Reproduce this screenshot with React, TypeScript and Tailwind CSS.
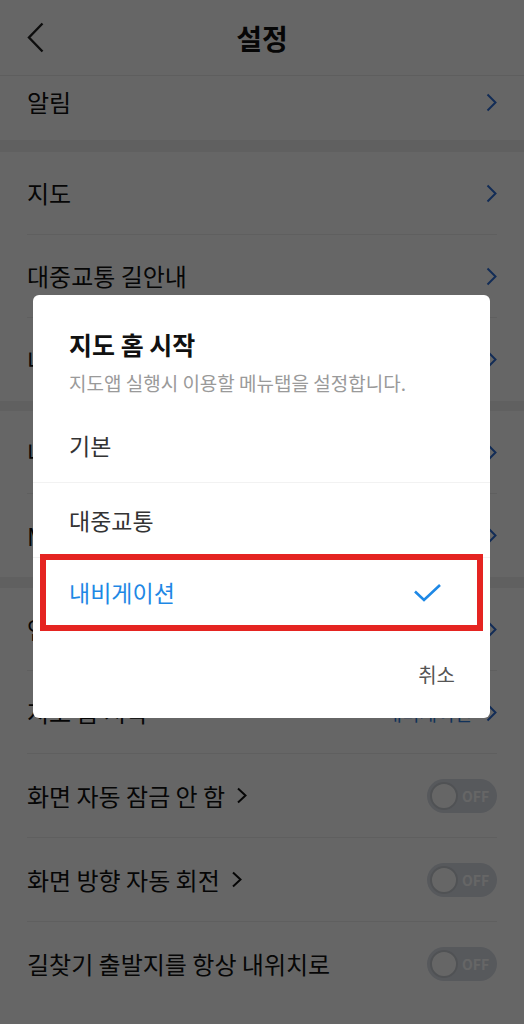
function Chevron({ className = "" }: { className?: string }) {
  return (
    <svg width="11" height="19" viewBox="0 0 11 19" fill="none" className={className}>
      <path d="M1.5 1.5l8 8-8 8" stroke="currentColor" strokeWidth="2" />
    </svg>
  );
}

function Row({ label, value, line = true }: { label: string; value?: string; line?: boolean }) {
  return (
    <div className={`mx-[27px] flex h-[83px] items-center justify-between ${line ? "border-b border-[#eeeeee]" : ""}`}>
      <span className="text-[24px] leading-none text-[#111]">{label}</span>
      <div className="flex items-center gap-[14px]">
        {value && <span className="text-[19px] leading-none text-[#2b7de0]">{value}</span>}
        <Chevron className="text-[#2f6fd6]" />
      </div>
    </div>
  );
}

function ToggleRow({ label, arrow = true, line = true }: { label: string; arrow?: boolean; line?: boolean }) {
  return (
    <div className={`mx-[27px] flex h-[84px] items-center justify-between ${line ? "border-b border-[#eeeeee]" : ""}`}>
      <div className="flex items-center gap-[11px]">
        <span className="text-[24px] leading-none text-[#111]">{label}</span>
        {arrow && (
          <svg width="12" height="17" viewBox="0 0 12 17" fill="none">
            <path d="M2 1.5l7.5 7-7.5 7" stroke="#111" strokeWidth="2" />
          </svg>
        )}
      </div>
      <div className="flex h-[34px] w-[70px] items-center rounded-full bg-[#d9dee7]">
        <div className="ml-[3px] h-[28px] w-[28px] rounded-full border-2 border-[#c8ccd3] bg-white" />
        <span className="ml-[4px] text-[14px] font-bold leading-none text-white">OFF</span>
      </div>
    </div>
  );
}

export default function App() {
  return (
    <div className="relative h-[1024px] w-full overflow-hidden bg-white font-['Noto_Sans_CJK_KR','Noto_Sans',sans-serif]">
      {/* Settings page */}
      <header className="grid h-[76px] grid-cols-[1fr_auto_1fr] items-center border-b border-[#ececec] px-[27px]">
        <svg width="17" height="31" viewBox="0 0 17 31" fill="none">
          <path d="M15.5 1.5L2 15.5l13.5 14" stroke="#222" strokeWidth="2.4" />
        </svg>
        <h1 className="text-[28px] font-bold leading-none text-[#111]">설정</h1>
        <div />
      </header>

      <div className="mx-[27px] flex h-[64px] items-center justify-between pb-[12px]">
        <span className="text-[24px] leading-none text-[#111]">알림</span>
        <Chevron className="text-[#2f6fd6]" />
      </div>

      <div className="h-[12px] bg-[#f0f0f0]" />
      <Row label="지도" />
      <Row label="대중교통 길안내" />
      <Row label="내비게이션" line={false} />

      <div className="h-[10px] bg-[#f0f0f0]" />
      <Row label="내 장소" />
      <Row label="MY플레이스" line={false} />

      <div className="h-[11px] bg-[#f0f0f0]" />
      <Row label="언어 설정" />
      <Row label="지도 홈 시작" value="내비게이션" />
      <ToggleRow label="화면 자동 잠금 안 함" />
      <ToggleRow label="화면 방향 자동 회전" />
      <ToggleRow label="길찾기 출발지를 항상 내위치로" arrow={false} line={false} />

      {/* Dim overlay */}
      <div className="absolute inset-0 bg-black/60" />

      {/* Dialog */}
      <div className="absolute left-[33px] top-[295px] w-[457px] overflow-hidden rounded-[6px] bg-white">
        <div className="px-[36px] pt-[32px]">
          <h2 className="text-[25px] font-bold leading-[34px] text-[#111]">지도 홈 시작</h2>
          <p className="mt-[10px] text-[19px] leading-[24px] text-[#9a9a9a]">지도앱 실행시 이용할 메뉴탭을 설정합니다.</p>
        </div>

        <div className="mt-[13px] flex h-[75px] items-center border-b border-[#f2f2f2] px-[36px]">
          <span className="text-[23px] leading-none text-[#333]">기본</span>
        </div>
        <div className="flex h-[75px] items-center border-b border-[#f2f2f2] px-[36px]">
          <span className="text-[23px] leading-none text-[#333]">대중교통</span>
        </div>
        <div className="mx-[7px] -mt-[4px] flex h-[77px] items-center justify-between border-[6px] border-[#e52421] pl-[23px] pr-[35px]">
          <span className="text-[23px] leading-none text-[#1e88e5]">내비게이션</span>
          <svg width="29" height="19" viewBox="0 0 29 19" fill="none">
            <path d="M2 8.5l9 8.5L27 2" stroke="#1e88e5" strokeWidth="2.6" />
          </svg>
        </div>

        <div className="flex h-[87px] items-center justify-end pr-[35px]">
          <span className="text-[20px] leading-none text-[#555]">취소</span>
        </div>
      </div>
    </div>
  );
}
